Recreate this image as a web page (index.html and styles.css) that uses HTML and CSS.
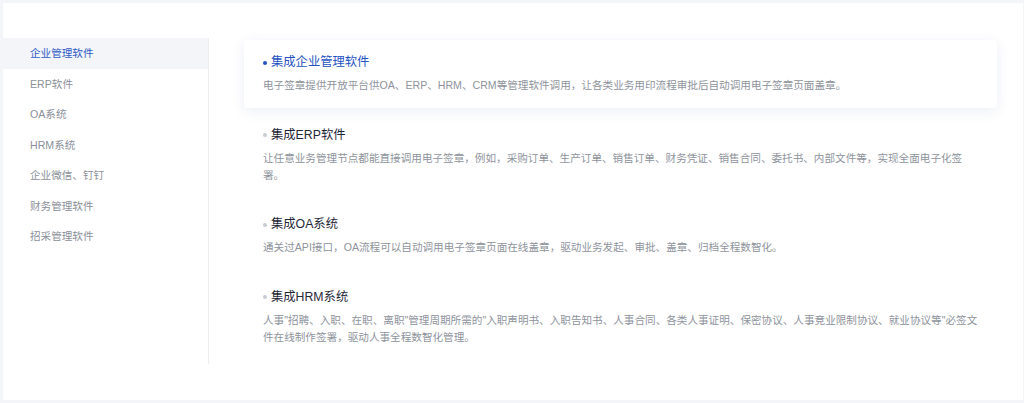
FILE: index.html
```html
<!DOCTYPE html>
<html lang="zh-CN">
<head>
    <meta charset="UTF-8">
    <meta name="viewport" content="width=device-width, initial-scale=1.0">
    <title>集成管理软件</title>
    <link rel="stylesheet" href="styles.css">
</head>
<body>
    <div class="panel">
        <ul class="side-menu">
            <li class="side-item active">企业管理软件</li>
            <li class="side-item">ERP软件</li>
            <li class="side-item">OA系统</li>
            <li class="side-item">HRM系统</li>
            <li class="side-item">企业微信、钉钉</li>
            <li class="side-item">财务管理软件</li>
            <li class="side-item">招采管理软件</li>
        </ul>

        <div class="content">
            <div class="item active">
                <h3 class="item-title"><span class="dot"></span>集成企业管理软件</h3>
                <p class="item-desc">电子签章提供开放平台供OA、ERP、HRM、CRM等管理软件调用，让各类业务用印流程审批后自动调用电子签章页面盖章。</p>
            </div>
            <div class="item">
                <h3 class="item-title"><span class="dot"></span>集成ERP软件</h3>
                <p class="item-desc">让任意业务管理节点都能直接调用电子签章，例如，采购订单、生产订单、销售订单、财务凭证、销售合同、委托书、内部文件等，实现全面电子化签署。</p>
            </div>
            <div class="item">
                <h3 class="item-title"><span class="dot"></span>集成OA系统</h3>
                <p class="item-desc">通关过API接口，OA流程可以自动调用电子签章页面在线盖章，驱动业务发起、审批、盖章、归档全程数智化。</p>
            </div>
            <div class="item">
                <h3 class="item-title"><span class="dot"></span>集成HRM系统</h3>
                <p class="item-desc">人事"招聘、入职、在职、离职"管理周期所需的"入职声明书、入职告知书、人事合同、各类人事证明、保密协议、人事竞业限制协议、就业协议等"必签文件在线制作签署，驱动人事全程数智化管理。</p>
            </div>
        </div>
    </div>
</body>
</html>
```

FILE: styles.css
```css
body {
    margin: 0;
    background-color: #f3f5f9;
    font-family: "Liberation Sans", "Noto Sans CJK SC", sans-serif;
}
.panel {
    display: flex;
    align-items: stretch;
    margin: 3px 1px 3px 3px;
    height: 397px;
    box-sizing: border-box;
    padding-top: 35px;
    background: #fff;
}
.side-menu {
    list-style: none;
    margin: 0;
    padding: 0;
    width: 205px;
    height: 326px;
    border-right: 1px solid #eceef2;
}
.side-item {
    height: 30.5px;
    line-height: 30.5px;
    padding-left: 27px;
    font-size: 10.6px;
    color: #8a8f99;
}
.side-item.active {
    background: #f3f5f9;
    color: #2f5ac4;
}
.content {
    flex: 1;
    padding: 2px 26px 0 35px;
}
.item {
    padding: 12px 19px 14px;
    margin-bottom: 4.5px;
    border-radius: 4px;
}
.item.active {
    background: #fff;
    box-shadow: 0 3px 14px rgba(40, 70, 140, 0.09);
}
.item-title {
    margin: 0;
    font-size: 12.3px;
    font-weight: normal;
    line-height: 21px;
    color: #1f2737;
    display: flex;
    align-items: center;
}
.item.active .item-title {
    color: #2653c2;
}
.dot {
    width: 4px;
    height: 4px;
    border-radius: 50%;
    background: #c8ccd3;
    margin-right: 4px;
}
.item.active .dot {
    background: #2653c2;
}
.item-desc {
    margin: 4px 0 0;
    font-size: 10.6px;
    line-height: 17px;
    color: #8e939c;
}
```
